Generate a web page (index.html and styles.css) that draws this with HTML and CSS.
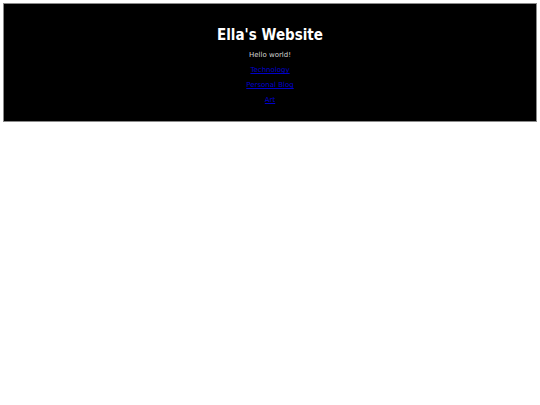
FILE: index.html
```html
<!DOCTYPE html>
<html>
<head>
<meta charset="utf-8">
<link rel="stylesheet" href="styles.css">
</head>
<body>
<div class="banner">
  <h1 class="title">Ella's Website</h1>
  <p class="intro">Hello world!</p>
  <nav class="links">
    <a href="#" class="link">Technology</a>
    <a href="#" class="link">Personal Blog</a>
    <a href="#" class="link">Art</a>
  </nav>
</div>
</body>
</html>
```
FILE: styles.css
```css
html, body { background: #fff; }
body {
  margin: 3px;
  font-family: "DejaVu Sans", Verdana, sans-serif;
}
.banner {
  background: #000;
  border: 1px solid #8a8a8a;
  text-align: center;
  padding: 18px 0 16px;
}
.title {
  margin: 0;
  color: #fff;
  font-size: 13.5px;
  font-weight: bold;
  line-height: 24px;
  transform: scaleY(1.2);
}
.intro {
  margin: 3px 0 0;
  color: #d4d4d4;
  font-size: 7px;
  line-height: 12px;
}
.links {
  display: flex;
  flex-direction: column;
  align-items: center;
  gap: 5px;
  margin-top: 4px;
}
.link {
  color: #0000cc;
  font-size: 7px;
  line-height: 10px;
}
```
